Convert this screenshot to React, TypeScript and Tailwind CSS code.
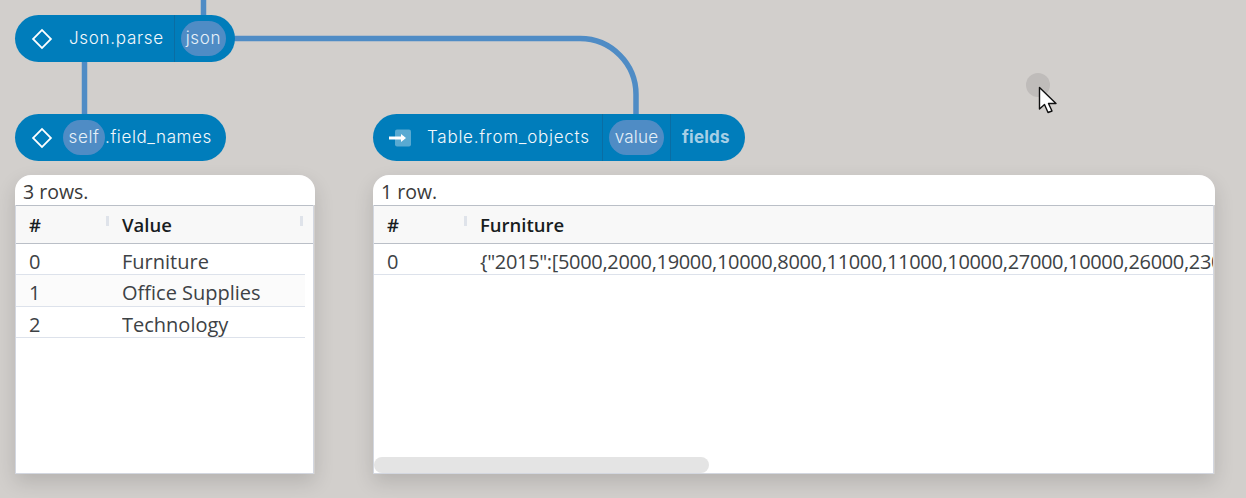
import React from "react";

const nodeFont = "font-['Inter','Noto_Sans',sans-serif]";
const tableFont = "font-['Open_Sans','Noto_Sans',sans-serif]";

function Diamond() {
  return (
    <svg width="22" height="22" viewBox="0 0 22 22" className="shrink-0 -mx-[1px]">
      <rect x="4.7" y="4.7" width="12.6" height="12.6" transform="rotate(45 11 11)" fill="none" stroke="#fff" strokeWidth="1.8" />
    </svg>
  );
}

function Arrow() {
  return (
    <svg width="24" height="20" viewBox="0 0 24 20" className="shrink-0">
      <rect x="7" y="1.5" width="16" height="17" rx="2" fill="#fff" fillOpacity="0.35" />
      <path d="M1 10H16" stroke="#fff" strokeWidth="3" />
      <path d="M13 6L18 10L13 14Z" fill="#fff" />
    </svg>
  );
}

function Pill({ children, className }: { children: React.ReactNode; className: string }) {
  return (
    <span className={`h-[35px] rounded-[18px] bg-[#4f8cc5] text-[#e6f0f8] flex items-center justify-center ${className}`}>
      {children}
    </span>
  );
}

function Table({ status, header, rows, className, width, rowWidth, rowClass, scroll }: {
  status: string; header: string; rows: string[]; className: string; width: string; rowWidth: string; rowClass?: string; scroll?: boolean;
}) {
  return (
    <div className={`absolute top-[175px] h-[299px] ${width} ${className} rounded-t-[16px] shadow-[0_8px_20px_rgba(0,0,0,0.14)] flex flex-col overflow-hidden ${tableFont}`}>
      <div className="h-[30px] bg-white pl-[8px] pt-[5px] text-[19.5px] leading-[24px] text-[#3a3a3a]">{status}</div>
      <div className="flex-1 relative bg-white mr-[1px] border-x border-b border-[#d3d7e0] flex flex-col min-h-0">
        <div className="h-[39px] shrink-0 bg-[#f8f8f8] border-y border-[#babfc7] flex items-center text-[18.5px] font-semibold text-[#181d1f]">
          <div className="w-[106px] pl-[13px] relative leading-[26px] pt-[1px]">#
            <span className="absolute right-[13px] top-[5px] h-[10px] w-[3px] bg-[#dfe3ea]" />
          </div>
          <div className="flex-1 relative leading-[26px] pt-[1px]">{header}
            {!scroll && <span className="absolute right-[10px] top-[5px] h-[10px] w-[3px] bg-[#dfe3ea]" />}
          </div>
        </div>
        <div className={rowWidth}>
          {rows.map((r, i) => (
            <div key={i} className={`h-[31.3px] flex border-b border-[#dde2eb] text-[20px] leading-[35px] text-[#3d4245] overflow-hidden whitespace-nowrap ${i === 1 ? "bg-[#fbfbfb]" : "bg-white"}`}>
              <div className="w-[106px] shrink-0 pl-[13px]">{i}</div>
              <div className={`flex-1 min-w-0 overflow-hidden ${rowClass ?? ""}`}>{r}</div>
            </div>
          ))}
        </div>
        {scroll && <div className="absolute left-0 bottom-0 w-[335px] h-[16px] rounded-full bg-[#e4e4e4]" />}
      </div>
    </div>
  );
}

export default function App() {
  return (
    <div className={`relative w-[1246px] h-[498px] overflow-hidden bg-[#d2cfcc] ${nodeFont}`}>
      <svg className="absolute left-0 top-0" width="1246" height="498" fill="none" stroke="#4f8cc5" strokeWidth="5.5">
        <path d="M203.5 0V24" />
        <path d="M84.5 60V122" />
        <path d="M230 38.5H580A56 56 0 0 1 636 95V122" />
      </svg>

      <div className="absolute left-[15px] top-[15px] h-[47px] w-[220px] rounded-[24px] bg-[#007dbb] flex items-center text-[17px] font-light tracking-[0.7px] text-[#f3f8fb]">
        <div className="ml-[17px]"><Diamond /></div>
        <span className="ml-[17px] w-[105px] pt-[1px]">Json.parse</span>
        <span className="w-px h-full bg-[#0a6da3]" />
        <Pill className="ml-[6px] w-[45px] pt-[1px]">json</Pill>
      </div>

      <div className="absolute left-[15px] top-[114px] h-[47px] w-[211px] rounded-[24px] bg-[#007dbb] flex items-center text-[17px] font-light tracking-[0.6px] text-[#f3f8fb]">
        <div className="ml-[17px]"><Diamond /></div>
        <Pill className="ml-[11px] w-[42px] pt-[1px]">self</Pill>
        <span className="pt-[1px]">.field_names</span>
      </div>

      <div className="absolute left-[373px] top-[114px] h-[47px] w-[372px] rounded-[24px] bg-[#007dbb] flex items-center text-[17px] font-light tracking-[0.75px] text-[#f3f8fb]">
        <div className="ml-[15px]"><Arrow /></div>
        <span className="ml-[15px] w-[175px] pt-[1px]">Table.from_objects</span>
        <span className="w-px h-full bg-[#0a6da3]" />
        <Pill className="ml-[6px] w-[55px] pt-[1px] tracking-[0.2px]">value</Pill>
        <span className="ml-[6px] w-px h-full bg-[#0a6da3]" />
        <span className="ml-[11px] pt-[1px] font-bold tracking-[0.2px] text-[#a6cfe6]">fields</span>
      </div>

      <Table status="3 rows." header="Value" rows={["Furniture", "Office Supplies", "Technology"]} className="left-[15px]" width="w-[300px]" rowWidth="w-[289px]" />
      <Table status="1 row." header="Furniture" rows={['{"2015":[5000,2000,19000,10000,8000,11000,11000,10000,27000,10000,26000,23000,12000,9000']} rowClass="tracking-[-0.33px]" className="left-[373px]" width="w-[842px]" rowWidth="w-full" scroll />

      <div className="absolute left-[1026px] top-[73px] w-[24px] h-[24px] rounded-full bg-[#bfbcba]" />
      <svg className="absolute left-[1038px] top-[86px]" width="22" height="30" viewBox="0 0 22 30">
        <path d="M1.5 1.5V23L6.5 18.5L10 26.5L14 25L10.5 17.5H18Z" fill="#fff" stroke="#111" strokeWidth="1.4" strokeLinejoin="round" />
      </svg>
    </div>
  );
}
